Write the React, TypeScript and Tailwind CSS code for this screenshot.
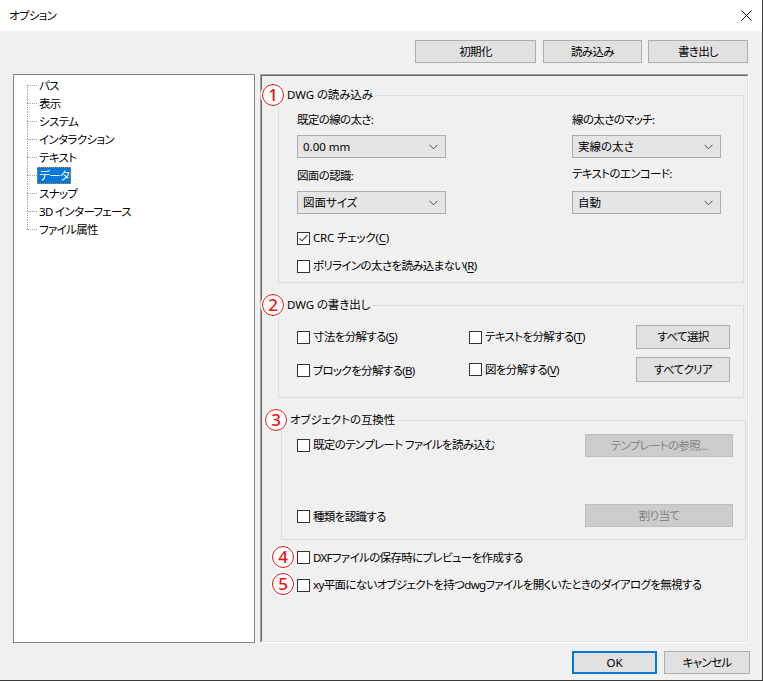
import React from "react"

const treeItems = ["パス", "表示", "システム", "インタラクション", "テキスト", "データ", "スナップ", "3D インターフェース", "ファイル属性"]

function Num({ n, className = "" }: { n: string; className?: string }) {
    return (
        <div className={`w-[22px] h-[22px] shrink-0 rounded-full bg-white border-[1.5px] border-[#f01010] shadow-[0_0_0_1.5px_#ffffff] flex items-center justify-center text-[#f01010] text-[17px] tracking-normal leading-none font-medium ${className}`}>
            <span className="-mt-[1px]">{n}</span>
        </div>
    )
}

function Check({ label, u, checked = false, latin = false }: { label: string; u?: string; checked?: boolean; latin?: boolean }) {
    return (
        <div className="flex items-center h-[16px] gap-[3px] whitespace-nowrap">
            <div className="w-[13px] h-[13px] border border-[#333333] bg-white flex items-center justify-center shrink-0">
                {checked && (
                    <svg width="11" height="11" viewBox="0 0 11 11">
                        <polyline points="1.5,5.5 4,8 9.5,2" fill="none" stroke="#555" strokeWidth="1.2" />
                    </svg>
                )}
            </div>
            <span className={latin ? "tracking-[-0.2px]" : ""}>
                {label}
                {u && (
                    <>
                        (<span className="underline underline-offset-2">{u}</span>)
                    </>
                )}
            </span>
        </div>
    )
}

function Select({ value }: { value: string }) {
    return (
        <div className="w-[149px] h-[23px] border border-[#acacac] bg-[#e5e5e5] flex items-center justify-between pl-[5px] pr-[7px]">
            <span className="tracking-normal">{value}</span>
            <svg width="9" height="6" viewBox="0 0 9 6">
                <polyline points="0.5,0.8 4.5,4.8 8.5,0.8" fill="none" stroke="#444" strokeWidth="1" />
            </svg>
        </div>
    )
}

function Btn({ children, className = "", disabled = false }: { children: React.ReactNode; className?: string; disabled?: boolean }) {
    return (
        <div
            className={`flex items-center justify-center shrink-0 border ${disabled ? "bg-[#cccccc] border-[#bfbfbf] text-[#838383]" : "bg-[#e1e1e1] border-[#adadad]"} ${className}`}
        >
            {children}
        </div>
    )
}

function Legend({ n, title }: { n: string; title: string }) {
    return (
        <div className="absolute left-[-17px] top-[-12px] flex items-center gap-[3px]">
            <Num n={n} />
            <span className="bg-[#f0f0f0] pr-[2px] leading-[16px] tracking-[-0.1px]">{title}</span>
        </div>
    )
}

export default function App() {
    return (
        <div className="w-[763px] h-[681px] flex flex-col bg-[#f0f0f0] text-[11.5px] tracking-[-0.65px] text-black border-r border-b border-[#3a3a3a] font-['Noto_Sans','Noto_Sans_CJK_JP',sans-serif] [font-feature-settings:'palt'] overflow-hidden">
            {/* title bar */}
            <div className="h-[31px] bg-white flex items-center justify-between pl-[9px] pr-[10px] shrink-0">
                <span>オプション</span>
                <svg width="11" height="11" viewBox="0 0 11 11">
                    <path d="M0.5 0.5 L10.5 10.5 M10.5 0.5 L0.5 10.5" stroke="#111" strokeWidth="1" />
                </svg>
            </div>

            {/* top buttons */}
            <div className="mt-[9px] flex justify-end pr-[14px] shrink-0">
                <Btn className="w-[121px] h-[23px]">初期化</Btn>
                <Btn className="w-[99px] h-[23px] ml-[7px]">読み込み</Btn>
                <Btn className="w-[100px] h-[23px] ml-[6px]">書き出し</Btn>
            </div>

            <div className="mt-[11px] flex gap-[5px] pl-[13px] h-[569px] shrink-0">
                {/* tree */}
                <div className="w-[242px] h-full bg-white border border-[#828282] pt-[1px]">
                    {treeItems.map((t, i) => (
                        <div key={t} className="flex h-[18px] items-stretch">
                            <div className="ml-[13px] w-[10px] flex flex-col shrink-0">
                                <div className={`h-[9px] ${i > 0 ? "border-l border-dotted border-[#a0a0a0]" : ""}`} />
                                <div className={`h-[9px] border-t border-dotted border-[#a0a0a0] ${i < treeItems.length - 1 ? "border-l" : ""}`} />
                            </div>
                            <div className="flex items-center">
                                <span
                                    className={`px-[1px] h-[17px] leading-[15px] border ${t === "データ" ? "bg-[#0078d7] text-white border-dotted border-[#c88a3a]" : "border-transparent"}`}
                                >
                                    {t}
                                </span>
                            </div>
                        </div>
                    ))}
                </div>

                {/* right panel */}
                <div className="w-[489px] h-full border border-t-[#a0a0a0] border-l-[#a0a0a0] border-r-white border-b-white">
                    <div className="h-full border border-t-[#696969] border-l-[#696969] border-r-[#e3e3e3] border-b-[#e3e3e3] flex flex-col">
                        {/* group 1 */}
                        <div className="relative mt-[19px] ml-[16px] mr-[3px] h-[188px] border border-[#dcdcdc] pl-[18px] pt-[16px]">
                            <Legend n="1" title="DWG の読み込み" />
                            <div className="flex gap-[126px]">
                                <div className="flex flex-col">
                                    <span className="leading-[16px]">既定の線の太さ:</span>
                                    <div className="mt-[7px]"><Select value="0.00 mm" /></div>
                                    <span className="leading-[16px] mt-[10px]">図面の認識:</span>
                                    <div className="mt-[7px]"><Select value="図面サイズ" /></div>
                                </div>
                                <div className="flex flex-col">
                                    <span className="leading-[16px]">線の太さのマッチ:</span>
                                    <div className="mt-[7px]"><Select value="実線の太さ" /></div>
                                    <span className="leading-[16px] mt-[8px]">テキストのエンコード:</span>
                                    <div className="mt-[9px]"><Select value="自動" /></div>
                                </div>
                            </div>
                            <div className="mt-[16px]"><Check label="CRC チェック" u="C" checked latin /></div>
                            <div className="mt-[12px]"><Check label="ポリラインの太さを読み込まない" u="R" /></div>
                        </div>

                        {/* group 2 */}
                        <div className="relative mt-[22px] ml-[16px] mr-[3px] h-[93px] border border-[#dcdcdc] pl-[18px] pt-[19px]">
                            <Legend n="2" title="DWG の書き出し" />
                            <div className="flex items-center h-[24px]">
                                <div className="w-[172px]"><Check label="寸法を分解する" u="S" /></div>
                                <div className="w-[167px]"><Check label="テキストを分解する" u="T" /></div>
                                <Btn className="w-[94px] h-[24px]">すべて選択</Btn>
                            </div>
                            <div className="flex items-center h-[25px] mt-[8px]">
                                <div className="w-[172px] pt-[2px]"><Check label="ブロックを分解する" u="B" /></div>
                                <div className="w-[167px]"><Check label="図を分解する" u="V" /></div>
                                <Btn className="w-[94px] h-[25px]">すべてクリア</Btn>
                            </div>
                        </div>

                        {/* group 3 */}
                        <div className="relative mt-[22px] ml-[19px] mr-[1px] h-[120px] border border-[#dcdcdc] pl-[15px] pt-[13px]">
                            <Legend n="3" title="オブジェクトの互換性" />
                            <div className="flex items-center h-[23px]">
                                <div className="w-[288px] -mt-[1px]"><Check label="既定のテンプレート ファイルを読み込む" /></div>
                                <Btn disabled className="w-[148px] h-[23px]">テンプレートの参照...</Btn>
                            </div>
                            <div className="flex items-center h-[23px] mt-[47px]">
                                <div className="w-[288px] pt-[2px]"><Check label="種類を認識する" /></div>
                                <Btn disabled className="w-[148px] h-[23px]">割り当て</Btn>
                            </div>
                        </div>

                        <div className="mt-[6px] ml-[10px] flex items-center gap-[3px] h-[22px]">
                            <Num n="4" />
                            <div className="pt-[1px]"><Check label="DXFファイルの保存時にプレビューを作成する" /></div>
                        </div>
                        <div className="mt-[5px] ml-[10px] flex items-center gap-[3px] h-[22px]">
                            <Num n="5" />
                            <div className="pt-[2px]"><Check label="xy平面にないオブジェクトを持つdwgファイルを開くいたときのダイアログを無視する" /></div>
                        </div>
                    </div>
                </div>
            </div>

            {/* bottom buttons */}
            <div className="mt-[8px] flex justify-end pr-[12px] shrink-0">
                <div className="w-[85px] h-[23px] border-2 border-[#0078d7] bg-[#e1e1e1] flex items-center justify-center tracking-normal">OK</div>
                <Btn className="w-[86px] h-[23px] ml-[7px]">キャンセル</Btn>
            </div>
        </div>
    )
}
